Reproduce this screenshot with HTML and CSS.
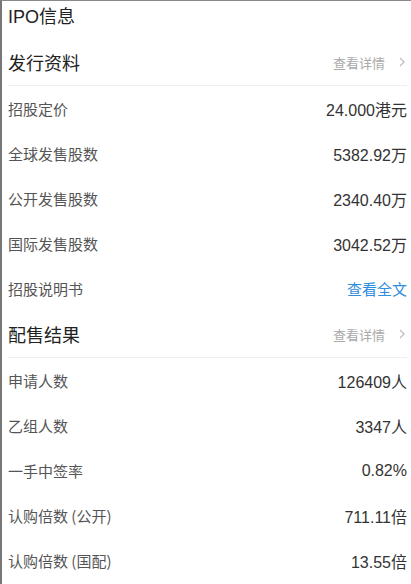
FILE: index.html
```html
<!DOCTYPE html>
<html lang="zh-CN">
<head>
    <meta charset="UTF-8">
    <meta name="viewport" content="width=device-width, initial-scale=1.0">
    <title>IPO信息</title>
    <link rel="stylesheet" href="styles.css">
</head>
<body>

<div class="page">
    <div class="page-title">IPO信息</div>

    <div class="section-head">
        <span class="section-name">发行资料</span>
        <span class="more">查看详情<svg class="chev" width="6" height="10" viewBox="0 0 6 10"><path d="M1 1l4 4-4 4" fill="none" stroke="#bbb" stroke-width="1.2"/></svg></span>
    </div>
    <div class="row"><span class="label">招股定价</span><span class="value">24.000港元</span></div>
    <div class="row"><span class="label">全球发售股数</span><span class="value">5382.92万</span></div>
    <div class="row"><span class="label">公开发售股数</span><span class="value">2340.40万</span></div>
    <div class="row"><span class="label">国际发售股数</span><span class="value">3042.52万</span></div>
    <div class="row"><span class="label">招股说明书</span><span class="value link">查看全文</span></div>

    <div class="section-head">
        <span class="section-name">配售结果</span>
        <span class="more">查看详情<svg class="chev" width="6" height="10" viewBox="0 0 6 10"><path d="M1 1l4 4-4 4" fill="none" stroke="#bbb" stroke-width="1.2"/></svg></span>
    </div>
    <div class="row"><span class="label">申请人数</span><span class="value">126409人</span></div>
    <div class="row"><span class="label">乙组人数</span><span class="value">3347人</span></div>
    <div class="row"><span class="label">一手中签率</span><span class="value">0.82%</span></div>
    <div class="row"><span class="label">认购倍数 (公开)</span><span class="value">711.11倍</span></div>
    <div class="row"><span class="label">认购倍数 (国配)</span><span class="value">13.55倍</span></div>
</div>

</body>
</html>
```

FILE: styles.css
```css
body { margin: 0; padding: 0; background-color: #fff; font-family: "Noto Sans CJK SC", "Liberation Sans", sans-serif; }
.page { height: 583px; border-top: 1px solid #8a8a8a; border-left: 2px solid #777; padding-left: 6px; padding-right: 4px; overflow: hidden; }
.page-title { height: 38px; line-height: 32px; font-family: "Liberation Sans", "Noto Sans CJK SC", sans-serif; font-size: 18px; color: #222; }
.section-head { height: 46px; display: flex; align-items: center; justify-content: space-between; border-bottom: 1px solid #eee; }
.section-name { font-size: 18px; color: #222; }
.more { display: flex; align-items: center; font-size: 13px; color: #aaa; }
.more .chev { margin-left: 14px; margin-right: 2px; }
.row { height: 45px; display: flex; align-items: center; justify-content: space-between; }
.label { font-size: 15px; color: #555; }
.value { font-family: "Liberation Sans", "Noto Sans CJK SC", sans-serif; font-size: 16px; color: #333; }
.value.link { font-family: "Noto Sans CJK SC", sans-serif; font-size: 15px; color: #2f8ddf; }
```
